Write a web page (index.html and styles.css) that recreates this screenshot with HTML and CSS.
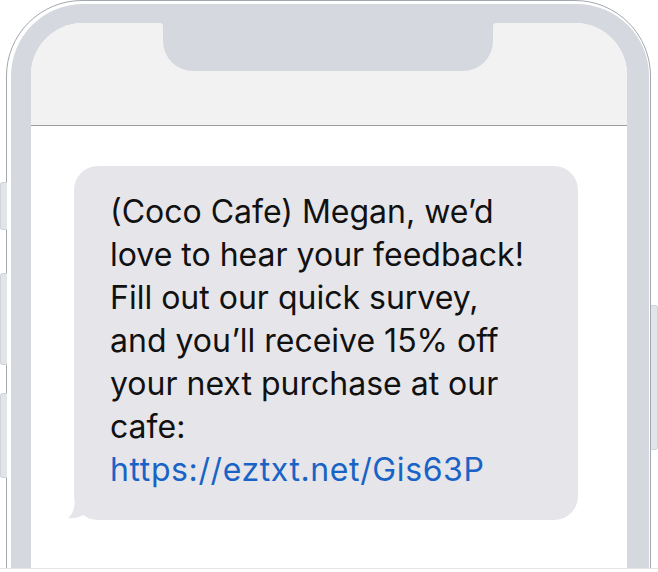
FILE: index.html
```html
<!DOCTYPE html>
<html>
<head>
<meta charset="utf-8">
<link rel="stylesheet" href="styles.css">
</head>
<body>
<div class="viewport">
  <div class="phone">
    <span class="btn btn-l1"></span>
    <span class="btn btn-l2"></span>
    <span class="btn btn-l3"></span>
    <span class="btn btn-r1"></span>
    <div class="frame">
      <div class="body">
        <div class="screen">
          <div class="status">
            <div class="notch"></div>
          </div>
          <div class="messages">
            <div class="bubble">
              <p class="msg">(Coco Cafe) Megan, we’d love to hear your feedback! Fill out our quick survey, and you’ll receive 15% off your next purchase at our cafe: <a class="link" href="#">https://eztxt.net/Gis63P</a></p>
              <svg class="tail" width="22" height="24" viewBox="0 0 22 24"><path d="M7 0 C7 12 5 18 0 22 C6 23 12 21 17 18 C19 20 21 22 22 24 L22 0 Z" fill="#e6e6ea"/></svg>
            </div>
          </div>
        </div>
      </div>
    </div>
  </div>
</div>
</body>
</html>
```

FILE: styles.css
```css
* { box-sizing: border-box; }
html, body { margin: 0; padding: 0; background: #fff; }
body { width: 658px; height: 572px; overflow: hidden; font-family: "Inter", "Roboto", sans-serif; }

.viewport {
  height: 569px;
  overflow: hidden;
  border-bottom: 1px solid #e4e4e6;
}

.phone {
  position: relative;
  margin-left: 6px;
  width: 645px;
  height: 760px;
}

.frame {
  height: 100%;
  border: 1px solid #a3a8ae;
  border-radius: 76px;
  padding: 3px 1px 0 4px;
  background: #fff;
}

.body {
  height: 100%;
  background: #d5d9df;
  border-radius: 72px;
  padding: 19px 22px 0 20px;
}

.screen {
  height: 100%;
  background: #fff;
  border-radius: 52px 52px 0 0;
  overflow: hidden;
}

.status {
  height: 103px;
  background: #f2f2f2;
  border-bottom: 1px solid #9e9e9e;
  display: flex;
  justify-content: center;
  padding-right: 2px;
}

.notch {
  position: relative;
  width: 330px;
  height: 48px;
  background: #d5d9df;
  border-radius: 0 0 30px 30px;
}
.notch::before, .notch::after {
  content: "";
  position: absolute;
  top: 0;
  width: 4px;
  height: 4px;
}
.notch::before { left: -4px; background: radial-gradient(circle at 0 100%, transparent 4px, #d5d9df 4.5px); }
.notch::after { right: -4px; background: radial-gradient(circle at 100% 100%, transparent 4px, #d5d9df 4.5px); }

.messages {
  padding: 40px 0 0 43px;
}

.bubble {
  position: relative;
  width: 504px;
  background: #e6e6ea;
  border-radius: 24px;
  padding: 24px 44px 29px 36px;
}

.msg {
  margin: 0;
  font-size: 32px;
  line-height: 43px;
  color: #111;
}

.link { color: #1a63c6; text-decoration: none; letter-spacing: 0.6px; }

.tail {
  position: absolute;
  left: -6px;
  bottom: 0;
}

.btn {
  position: absolute;
  width: 7px;
  background: #e1e4e8;
  border: 1px solid #d0d4d9;
}
.btn-l1 { left: -6px; top: 182px; height: 48px; border-radius: 3px 0 0 3px; border-right: 0; }
.btn-l2 { left: -6px; top: 273px; height: 92px; border-radius: 3px 0 0 3px; border-right: 0; }
.btn-l3 { left: -6px; top: 393px; height: 85px; border-radius: 3px 0 0 3px; border-right: 0; }
.btn-r1 { right: -7px; top: 305px; height: 145px; border-radius: 0 3px 3px 0; border-left: 0; }
```
